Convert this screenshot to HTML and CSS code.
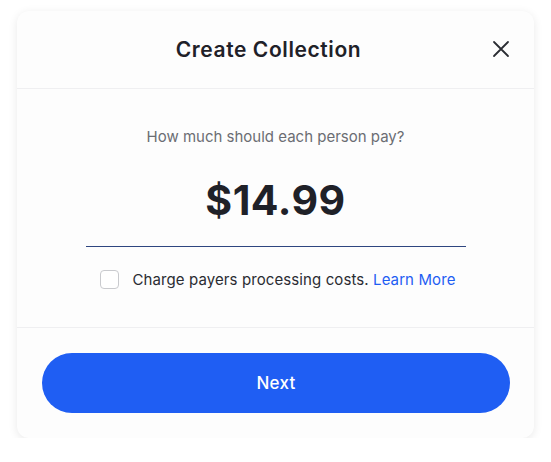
FILE: index.html
```html
<!DOCTYPE html>
<html lang="en">
<head>
    <meta charset="UTF-8">
    <meta name="viewport" content="width=device-width, initial-scale=1.0">
    <title>Create Collection</title>
    <link rel="stylesheet" href="styles.css">
</head>
<body>
    <div class="modal">
        <div class="modal-header">
            <h2>Create Collection</h2>
            <button class="close-btn" aria-label="Close">
                <svg width="18" height="18" viewBox="0 0 18 18"><path d="M2 2L16 16M16 2L2 16" stroke="#2b2d33" stroke-width="1.8" stroke-linecap="round"/></svg>
            </button>
        </div>
        <div class="modal-body">
            <p class="question">How much should each person pay?</p>
            <div class="amount">$14.99</div>
            <label class="fee-check">
                <span class="box"></span>
                <span>Charge payers processing costs. <a href="#">Learn More</a></span>
            </label>
        </div>
        <div class="modal-footer">
            <button class="next-btn">Next</button>
        </div>
    </div>
</body>
</html>
```

FILE: styles.css
```css
body {
    margin: 0;
    font-family: 'Inter', 'Liberation Sans', sans-serif;
    background: #ffffff;
    padding: 11px 17px 0 17px;
}
.modal {
    width: 517px;
    background: #fdfdfd;
    border-radius: 12px;
    box-shadow: 0 2px 10px rgba(0, 0, 0, 0.09);
}
.modal-header {
    height: 77px;
    border-bottom: 1px solid #efeff1;
    display: flex;
    align-items: center;
    justify-content: center;
    padding-right: 14px;
    position: relative;
}
.modal-header h2 {
    margin: 0;
    font-size: 21px;
    font-weight: 600;
    color: #1f2128;
    letter-spacing: 0.6px;
}
.close-btn {
    position: absolute;
    right: 24px;
    top: 29px;
    background: none;
    border: none;
    padding: 0;
    width: 18px;
    height: 18px;
    cursor: pointer;
}
.modal-body {
    height: 238px;
    border-bottom: 1px solid #efeff1;
    display: flex;
    flex-direction: column;
    align-items: center;
}
.question {
    margin: 38px 0 0;
    font-size: 15px;
    color: #6b6d73;
}
.amount {
    margin-top: 26px;
    width: 380px;
    text-align: center;
    font-size: 41px;
    font-weight: 700;
    color: #1f2128;
    padding-bottom: 18px;
    border-bottom: 1px solid #2f4680;
    line-height: 56px;
    letter-spacing: 0.5px;
}
.fee-check {
    margin-top: 23px;
    padding-left: 5px;
    display: flex;
    align-items: center;
    gap: 13px;
    font-size: 15px;
    color: #2a2c32;
    letter-spacing: 0.1px;
}
.box {
    width: 17px;
    height: 17px;
    border: 1.5px solid #c9cace;
    border-radius: 4px;
    background: #fff;
}
.fee-check a {
    color: #1f5ef3;
    text-decoration: none;
}
.modal-footer {
    padding: 25px 24px 25px 25px;
}
.next-btn {
    width: 100%;
    height: 60px;
    border: none;
    border-radius: 30px;
    background: #1f5ef3;
    color: #ffffff;
    font-family: inherit;
    font-size: 17px;
    font-weight: 500;
    letter-spacing: 0.3px;
    cursor: pointer;
}
```
